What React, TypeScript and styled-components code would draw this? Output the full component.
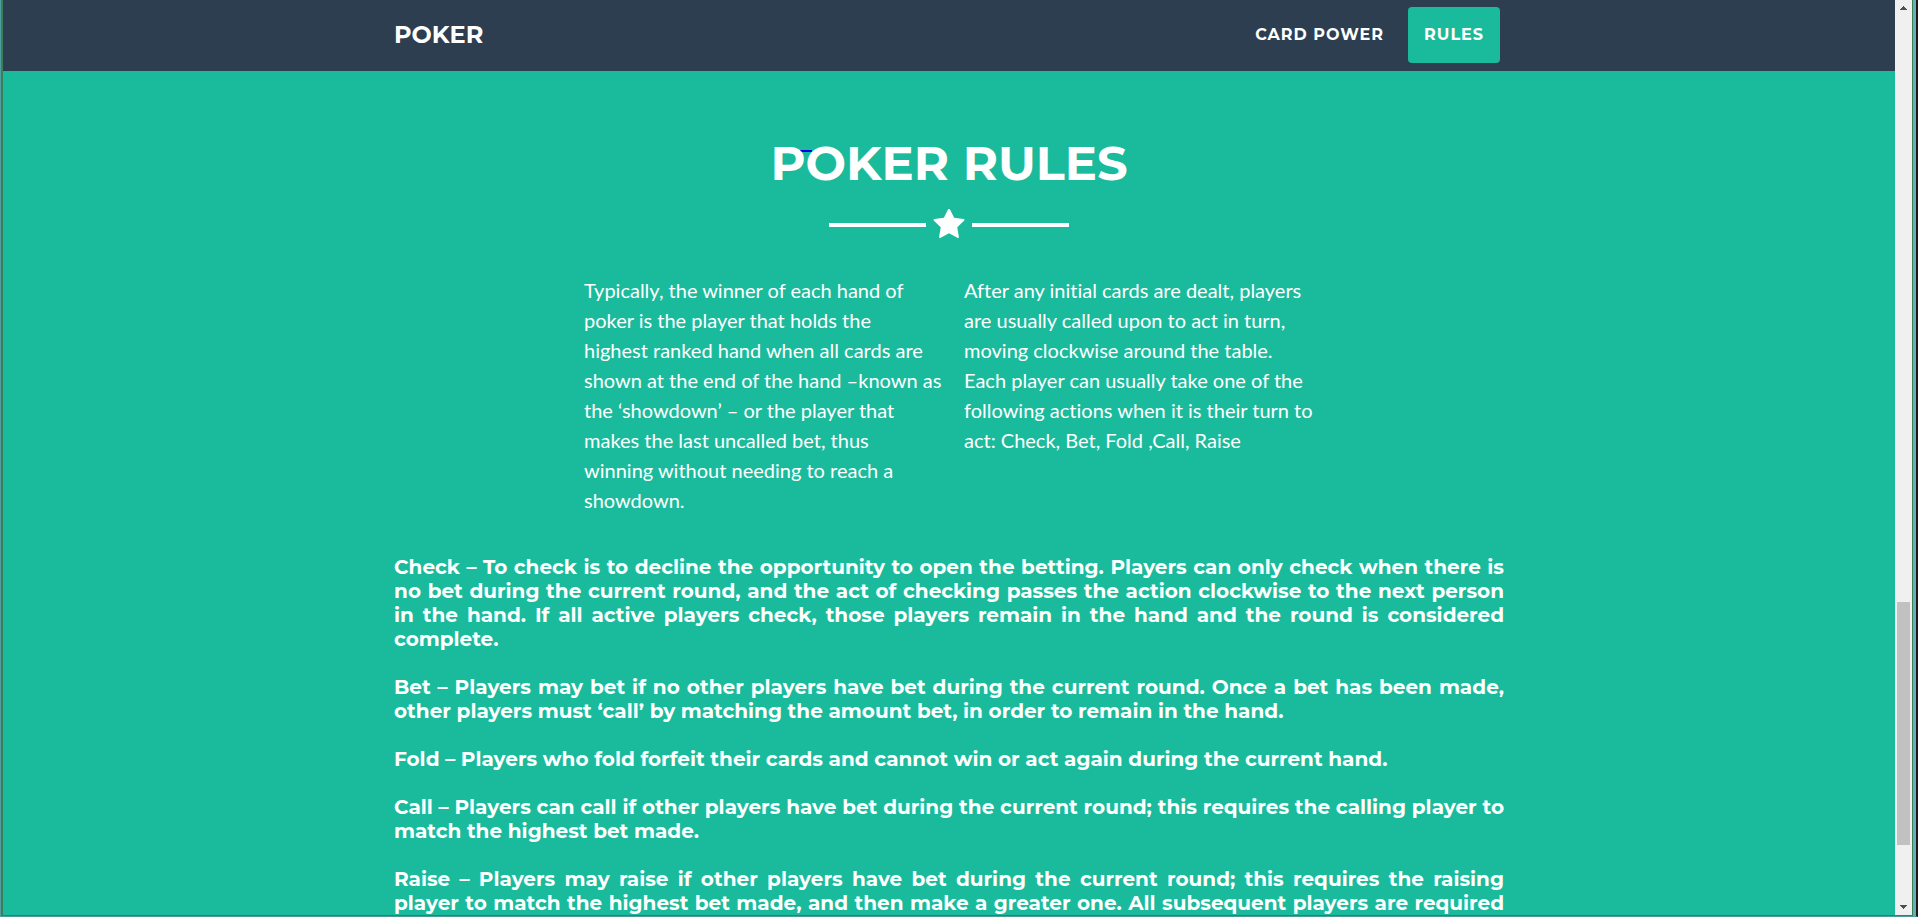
import React from "react";
import styled, { createGlobalStyle } from "styled-components";

const GlobalStyle = createGlobalStyle`
  *, *::before, *::after { box-sizing: border-box; }
  body {
    margin: 0;
    color: #fff;
    font-family: Lato, sans-serif;
    overflow: hidden;
  }
`;

const heading = `font-family: Montserrat, Inter, sans-serif; font-weight: 700;`;

const Window = styled.div`
  display: flex;
  height: 100vh;
  background: #1abb9c;
  border-left: 1px solid #4f9f9f;
  border-right: 2px solid #20181a;
  border-bottom: 1px solid #4f9c98;
`;

const Frame = styled.div`
  display: flex;
  flex: 1;
  min-width: 0;
  border: solid #3d7d5c;
  border-width: 0 1px 1px 2px;
`;

const Edge = styled.div`
  width: 3px;
  background: #5fb3b3;
`;

const Page = styled.div`
  flex: 1;
  min-width: 0;
  overflow: hidden;
`;

const Container = styled.div`
  width: 100%;
  max-width: 1140px;
  margin: 0 auto;
  padding: 0 15px;
`;

const Navbar = styled.header`
  background: #2c3e50;
`;

const NavRow = styled(Container)`
  display: flex;
  align-items: center;
  justify-content: space-between;
  padding-top: 7px;
  padding-bottom: 8px;
`;

const Brand = styled.a`
  ${heading}
  font-size: 24px;
  line-height: 36px;
  color: #fff;
  text-decoration: none;
`;

const NavLinks = styled.nav`
  display: flex;
  gap: 8px;
  padding-right: 4px;
`;

const NavLink = styled.a<{ $active?: boolean }>`
  ${heading}
  padding: 16px;
  border-radius: 4px;
  font-size: 16px;
  line-height: 24px;
  letter-spacing: 1px;
  color: #fff;
  text-decoration: none;
  background: ${(p) => (p.$active ? "#1abb9c" : "transparent")};
`;

const Title = styled.h2`
  ${heading}
  position: relative;
  z-index: 0;
  width: fit-content;
  margin: 62px auto 16px;
  font-size: 48px;
  line-height: 60px;
`;

const StrayLink = styled.a`
  position: absolute;
  z-index: -1;
  left: 30px;
  top: 17px;
  width: 12px;
  height: 2px;
  background: #0000ee;
`;

const Divider = styled.div`
  display: flex;
  align-items: center;
  justify-content: center;
  gap: 7px;
  margin-bottom: 34px;

  &::before, &::after {
    content: "";
    width: 97px;
    height: 4px;
    background: #fff;
  }
`;

const Columns = styled.div`
  display: grid;
  grid-template-columns: 360px 350px;
  justify-content: center;
  gap: 20px;
  margin-bottom: 40px;
`;

const Lead = styled.p`
  margin: 0;
  font-size: 20px;
  line-height: 30px;
  font-variant-ligatures: none;
`;

const Rule = styled.p<{ $fill?: boolean }>`
  ${heading}
  margin: 0 0 24px;
  font-size: 20px;
  line-height: 24px;
  text-align: justify;
  text-align-last: ${(p) => (p.$fill ? "justify" : "auto")};
`;

const Scrollbar = styled.div`
  display: flex;
  flex-direction: column;
  align-items: center;
  width: 17px;
  padding: 6px 2px;
  background: #f0f0f0;
`;

const Track = styled.div`
  display: grid;
  grid-template-rows: 592fr 243fr 60fr;
  flex: 1;
  width: 13px;
`;

const Thumb = styled.div`
  grid-row: 2;
  background: #c1c1c1;
`;

const rules = [
  "Check – To check is to decline the opportunity to open the betting. Players can only check when there is no bet during the current round, and the act of checking passes the action clockwise to the next person in the hand. If all active players check, those players remain in the hand and the round is considered complete.",
  "Bet – Players may bet if no other players have bet during the current round. Once a bet has been made, other players must ‘call’ by matching the amount bet, in order to remain in the hand.",
  "Fold – Players who fold forfeit their cards and cannot win or act again during the current hand.",
  "Call – Players can call if other players have bet during the current round; this requires the calling player to match the highest bet made.",
  "Raise – Players may raise if other players have bet during the current round; this requires the raising player to match the highest bet made, and then make a greater one. All subsequent players are required",
];

export default function App() {
  return (
    <Window>
      <GlobalStyle />
      <Frame>
        <Page>
          <Navbar>
            <NavRow>
              <Brand href="#top">POKER</Brand>
              <NavLinks>
                <NavLink href="#cards">CARD POWER</NavLink>
                <NavLink href="#rules" $active>RULES</NavLink>
              </NavLinks>
            </NavRow>
          </Navbar>
          <Container as="main">
            <Title>
              <StrayLink href="#rules" aria-label="Rules" />
              POKER RULES
            </Title>
            <Divider>
              <svg width="32" height="32" viewBox="-27 64 1718 1718" fill="#fff" aria-hidden="true">
                <path d="M1664 647q0 22-26 48l-363 354 86 500q1 7 1 20 0 21-10.5 35.5t-30.5 14.5q-19 0-40-12l-449-236-449 236q-22 12-40 12-21 0-31.5-14.5t-10.5-35.5q0-6 2-20l86-500-364-354q-25-27-25-48 0-37 56-46l502-73 225-455q19-41 49-41t49 41l225 455 502 73q56 9 56 46z" />
              </svg>
            </Divider>
            <Columns>
              <Lead>
                Typically, the winner of each hand of poker is the player that holds the
                <br />
                highest ranked hand when all cards are shown at the end of the hand –known as
                <br />
                the ‘showdown’ – or the player that
                <br />
                makes the last uncalled bet, thus
                <br />
                winning without needing to reach a
                <br />
                showdown.
              </Lead>
              <Lead>
                After any initial cards are dealt, players are usually called upon to act in turn, moving clockwise
                around the table. Each player can usually take one of the following actions when it is their turn to
                act: Check, Bet, Fold ,Call, Raise
              </Lead>
            </Columns>
            {rules.map((rule, i) => (
              <Rule key={rule} $fill={i === rules.length - 1}>{rule}</Rule>
            ))}
          </Container>
        </Page>
        <Scrollbar aria-hidden="true">
          <svg width="7" height="4" viewBox="0 0 7 4"><path d="M3 0h1v1h1v1h1v1h1v1H0V3h1V2h1V1h1z" fill="#505050" /></svg>
          <Track><Thumb /></Track>
          <svg width="7" height="4" viewBox="0 0 7 4"><path d="M0 0h7v1H6v1H5v1H4v1H3V3H2V2H1V1H0z" fill="#505050" /></svg>
        </Scrollbar>
      </Frame>
      <Edge />
    </Window>
  );
}
